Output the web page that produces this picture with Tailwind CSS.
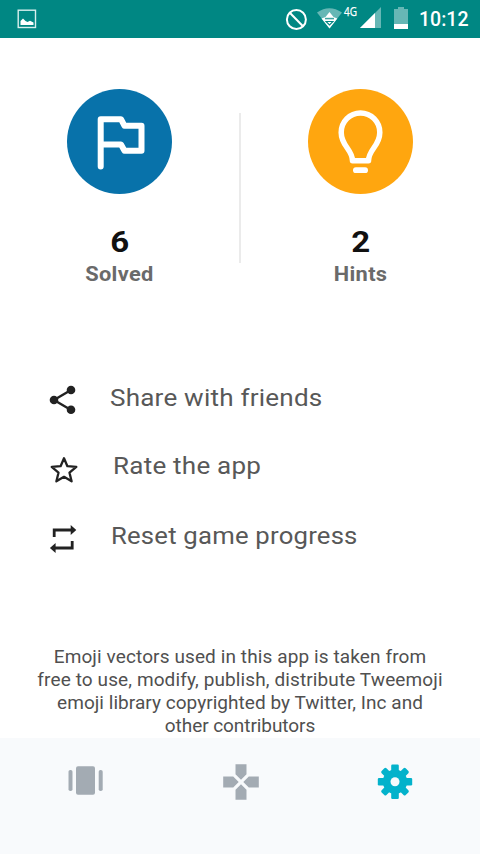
<!DOCTYPE html>
<html lang="en">
<head>
<meta charset="utf-8">
<title>Settings</title>
<script src="https://cdn.jsdelivr.net/npm/@tailwindcss/browser@4"></script>
</head>
<body class="bg-white">
<div class="flex flex-col w-[480px] h-[854px] overflow-hidden bg-white font-[Roboto,sans-serif]">
  <header class="flex justify-between h-[38px] shrink-0 bg-[#008783] text-white">
    <svg class="ml-[17px] mt-[9px]" width="20" height="20" viewBox="0 0 20 20"><rect x="1.2" y="1.2" width="17.3" height="17.3" fill="none" stroke="#d8efee" stroke-width="1.4"/><path d="M3.500 16V12L6 9.500L8.500 12L10.500 13L13 11.700L16.500 13.500V16z" fill="#fff"/></svg>
    <div class="flex">
      <svg width="134" height="38" viewBox="285 0 134 38">
        <circle cx="296.4" cy="19.5" r="9.5" fill="none" stroke="#fff" stroke-width="2"/>
        <path d="M289.8 12.8l13.2 13.4" stroke="#fff" stroke-width="2"/>
        <path d="M317 12.500Q329.300 4 342 12.500L329.500 28.500z" fill="#66b7b5"/>
        <path d="M321.500 18.500L325 17.200H334L337.300 18.500L329.500 28.500z" fill="#fff"/>
        <path d="M329.500 12l4 5h-8z" fill="#fff"/>
        <path d="M325 18.800h9M326 21.500h7l-3.500 3.500z" fill="none" stroke="#008783" stroke-width="1.100"/>
        <text x="344" y="16.300" font-family="Open Sans, sans-serif" font-size="12.500" font-weight="500" textLength="13" lengthAdjust="spacingAndGlyphs" fill="#fff" stroke="#fff" stroke-width=".25">4G</text>
        <path d="M360 28L381 7v21z" fill="#66b7b5"/><path d="M360 28L375 13v15z" fill="#fff"/>
        <path d="M394 9h4V7h6v2h4v15h-14z" fill="#66b7b5"/><path d="M394 24h14v5h-14z" fill="#fff"/>
      </svg>
      <div class="w-[61px] pt-[7px] text-[19.500px] leading-[25px] font-medium">10:12</div>
    </div>
  </header>

  <main class="flex flex-col h-[700px] shrink-0">
    <section class="flex h-[323px] shrink-0 pt-[51px]">
      <div class="flex flex-col items-center w-[239px]">
        <svg width="105" height="105" viewBox="67 89 105 105"><circle cx="119.500" cy="141.500" r="52.500" fill="#0872aa"/><path d="M100.700 166.500V119.200H121L124.500 125.800H141.500V150.700H124.500L121 144.500H101" fill="none" stroke="#fff" stroke-width="6" stroke-linejoin="round" stroke-linecap="round"/></svg>
        <div class="mt-[30px] text-[30px] leading-9 font-bold text-[#111] scale-x-110">6</div>
        <div class="mt-[2px] text-[20px] leading-6 font-bold text-[#6a6a6a] tracking-[0.3px] scale-x-[1.09]">Solved</div>
      </div>
      <div class="w-[2px] h-[150px] mt-6 bg-[#ebebeb]"></div>
      <div class="flex flex-col items-center w-[239px]">
        <svg width="105" height="105" viewBox="308 89 105 105"><circle cx="360.500" cy="141.500" r="52.500" fill="#ffa60f"/><path d="M352.500 160.800H368.500C368.500 149.500 379.800 146 379.800 132.400A19.300 19.500 0 0 0 341.200 132.400C341.200 146 352.500 149.500 352.500 160.800z" fill="none" stroke="#fff" stroke-width="5.500" stroke-linejoin="round"/><rect x="353" y="167.300" width="15" height="5.800" rx="2.900" fill="#fff"/></svg>
        <div class="mt-[30px] text-[30px] leading-9 font-bold text-[#111] scale-x-110">2</div>
        <div class="mt-[2px] text-[20px] leading-6 font-bold text-[#6a6a6a] tracking-[0.3px] scale-x-[1.09]">Hints</div>
      </div>
    </section>

    <section class="flex flex-col h-[284px] shrink-0 pl-[49px] pt-[20px] text-[24px] leading-[34px] text-[#585858]">
      <div class="flex h-[68px] shrink-0">
        <svg class="mt-[4px]" width="28" height="30" viewBox="49 385 28 30"><path d="M71 390L54 400L71 410" fill="none" stroke="#222" stroke-width="2.400"/><g fill="#222"><circle cx="71" cy="390" r="4.300"/><circle cx="54" cy="400" r="4.300"/><circle cx="71" cy="409.800" r="4.300"/></g></svg>
        <div class="ml-[33px] origin-left scale-x-[1.085] tracking-[0.2px] whitespace-nowrap">Share with friends</div>
      </div>
      <div class="flex h-[70px] shrink-0">
        <svg class="mt-[6px]" width="30" height="30" viewBox="49 455 30 30"><path d="M64 458.200L67.400 466.200L76.300 466.900L69.500 472.700L71.600 481.300L64 476.800L56.400 481.300L58.500 472.700L51.700 466.900L60.600 466.200z" fill="none" stroke="#222" stroke-width="2.300" stroke-linejoin="round"/></svg>
        <div class="ml-[34px] origin-left scale-x-[1.085] tracking-[0.2px] whitespace-nowrap">Rate the app</div>
      </div>
      <div class="flex h-[69px] shrink-0">
        <svg class="mt-[5px]" width="28" height="30" viewBox="49 524 28 30"><path d="M54.200 537V530H71M72.200 541V548H55" fill="none" stroke="#222" stroke-width="2.800"/><path d="M70.700 525L76.300 530L70.700 535zM55.600 543L49.900 548L55.600 553z" fill="#222"/></svg>
        <div class="ml-[34px] origin-left scale-x-[1.07] tracking-[0.2px] whitespace-nowrap">Reset game progress</div>
      </div>
    </section>

    <p class="text-center text-[19px] leading-[23px] text-[#505050] whitespace-nowrap"><span class="tracking-[0.11px]">Emoji vectors used in this app is taken from<br>free to use, modify, publish, distribute Tweemoji</span><br><span class="tracking-[0.04px]">emoji library copyrighted by Twitter, Inc and</span><br><span class="tracking-[-0.07px]">other contributors</span></p>
  </main>

  <nav class="flex h-[116px] shrink-0 bg-[#f8fafc] pt-[24px]">
    <svg class="ml-[66px]" width="40" height="38" viewBox="66 762 40 38" fill="#a3abb3"><rect x="68.500" y="770" width="4" height="21" rx="1.800"/><rect x="76" y="766.200" width="19" height="28.600" rx="2"/><rect x="98.700" y="770" width="4" height="21" rx="1.800"/></svg>
    <svg class="ml-[115px]" width="40" height="38" viewBox="221 762 40 38" fill="#a3abb3"><path d="M235.500 764.200H246.500V774.200L241 779.700L235.500 774.200zM235.500 799.800H246.500V789.800L241 784.300L235.500 789.800zM223.200 776.500H233.200L238.700 782L233.200 787.500H223.200zM258.800 776.500H248.800L243.300 782L248.800 787.500H258.800z"/></svg>
    <svg class="ml-[114px]" width="40" height="38" viewBox="375 762 40 38"><g fill="#03b2cb"><circle cx="395" cy="781.700" r="12.200"/><rect x="391.200" y="764.500" width="7.600" height="34.400" rx="1.200"/><rect x="377.800" y="777.900" width="34.400" height="7.600" rx="1.200"/><g transform="rotate(45 395 781.700)"><rect x="391.600" y="764.700" width="6.800" height="34" rx="1.500"/><rect x="378" y="778.300" width="34" height="6.800" rx="1.500"/></g></g><circle cx="395" cy="781.700" r="4.500" fill="#f8fafc"/></svg>
  </nav>
</div>
</body>
</html>
